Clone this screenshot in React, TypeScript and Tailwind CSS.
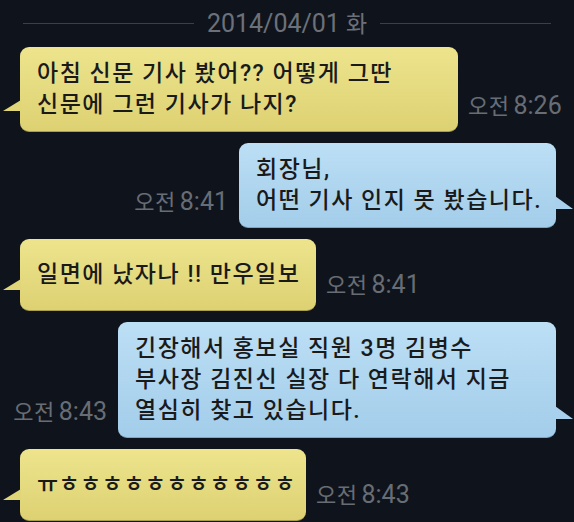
import React from 'react';

interface Message {
    mine: boolean;
    lines: string[];
    time: string;
    width: string;
    tight?: boolean;
}

const messages: Message[] = [
    { mine: false, lines: ['아침 신문 기사 봤어?? 어떻게 그딴', '신문에 그런 기사가 나지?'], time: '8:26', width: 'w-[438px]' },
    { mine: true, lines: ['회장님,', '어떤 기사 인지 못 봤습니다.'], time: '8:41', width: 'w-[317px]' },
    { mine: false, lines: ['일면에 났자나 !! 만우일보'], time: '8:41', width: 'w-[296px]' },
    { mine: true, lines: ['긴장해서 홍보실 직원 3명 김병수', '부사장 김진신 실장 다 연락해서 지금', '열심히 찾고 있습니다.'], time: '8:43', width: 'w-[438px]' },
    { mine: false, lines: ['ㅠㅎㅎㅎㅎㅎㅎㅎㅎㅎㅎㅎ'], time: '8:43', width: 'w-[286px]', tight: true },
];

const TimeStamp: React.FC<{ time: string }> = ({ time }) => (
    <div className="pb-[10px] leading-[26px] text-[#686d75] whitespace-nowrap">
        <span className="text-[22px] tracking-[0.5px]">오전</span>
        <span className="text-[25px] ml-[4px]">{time}</span>
    </div>
);

const Bubble: React.FC<{ msg: Message }> = ({ msg }) => {
    const colors = msg.mine
        ? 'bg-linear-to-b from-[#bcdff5] to-[#a3cdea] border-b border-[#7fa6c0]'
        : 'bg-linear-to-b from-[#ede48d] to-[#ddd172] border-b border-[#a89e4c]';

    return (
        <div className={`relative ${msg.width} min-h-[72px] flex items-center rounded-[9px] px-[17px] py-[11px] ${colors}`}>
            {/* tail */}
            {msg.mine ? (
                <svg className="absolute right-[-18px] bottom-[17px]" width="19" height="14" viewBox="0 0 19 14">
                    <polygon points="0,0 18,13 0,13" fill="#a9d1ed" />
                </svg>
            ) : (
                <svg className="absolute left-[-17px] bottom-[19px]" width="18" height="12" viewBox="0 0 18 12">
                    <polygon points="18,0 0,11 18,11" fill="#e1d677" />
                </svg>
            )}
            <div
                className={`text-[23px] leading-[31px] font-medium text-[#1a1a1a] whitespace-nowrap ${
                    msg.tight ? 'tracking-[0.4px]' : 'tracking-[1.5px]'
                }`}
            >
                {msg.lines.map((line, i) => (
                    <div key={i}>{line}</div>
                ))}
            </div>
        </div>
    );
};

export default function App() {
    return (
        <div
            className="w-[574px] h-[522px] overflow-hidden bg-[#0f141c] flex flex-col"
            style={{ fontFamily: 'Roboto, "Noto Sans CJK KR", sans-serif' }}
        >
            {/* date divider */}
            <div className="h-[47px] shrink-0 flex items-center px-[23px] gap-[13px]">
                <div className="flex-1 h-px bg-[#3b4048]" />
                <div className="text-[#6c7179] whitespace-nowrap leading-none">
                    <span className="text-[25px]">2014/04/01</span>
                    <span className="text-[23px] ml-[6px]">화</span>
                </div>
                <div className="flex-1 h-px bg-[#3b4048]" />
            </div>

            <div className="flex flex-col gap-[11px]">
                {messages.map((msg, idx) =>
                    msg.mine ? (
                        <div key={idx} className="flex justify-end items-end gap-[11px] pr-[18px]">
                            <TimeStamp time={msg.time} />
                            <Bubble msg={msg} />
                        </div>
                    ) : (
                        <div key={idx} className="flex items-end gap-[10px] pl-[20px]">
                            <Bubble msg={msg} />
                            <TimeStamp time={msg.time} />
                        </div>
                    )
                )}
            </div>
        </div>
    );
}
